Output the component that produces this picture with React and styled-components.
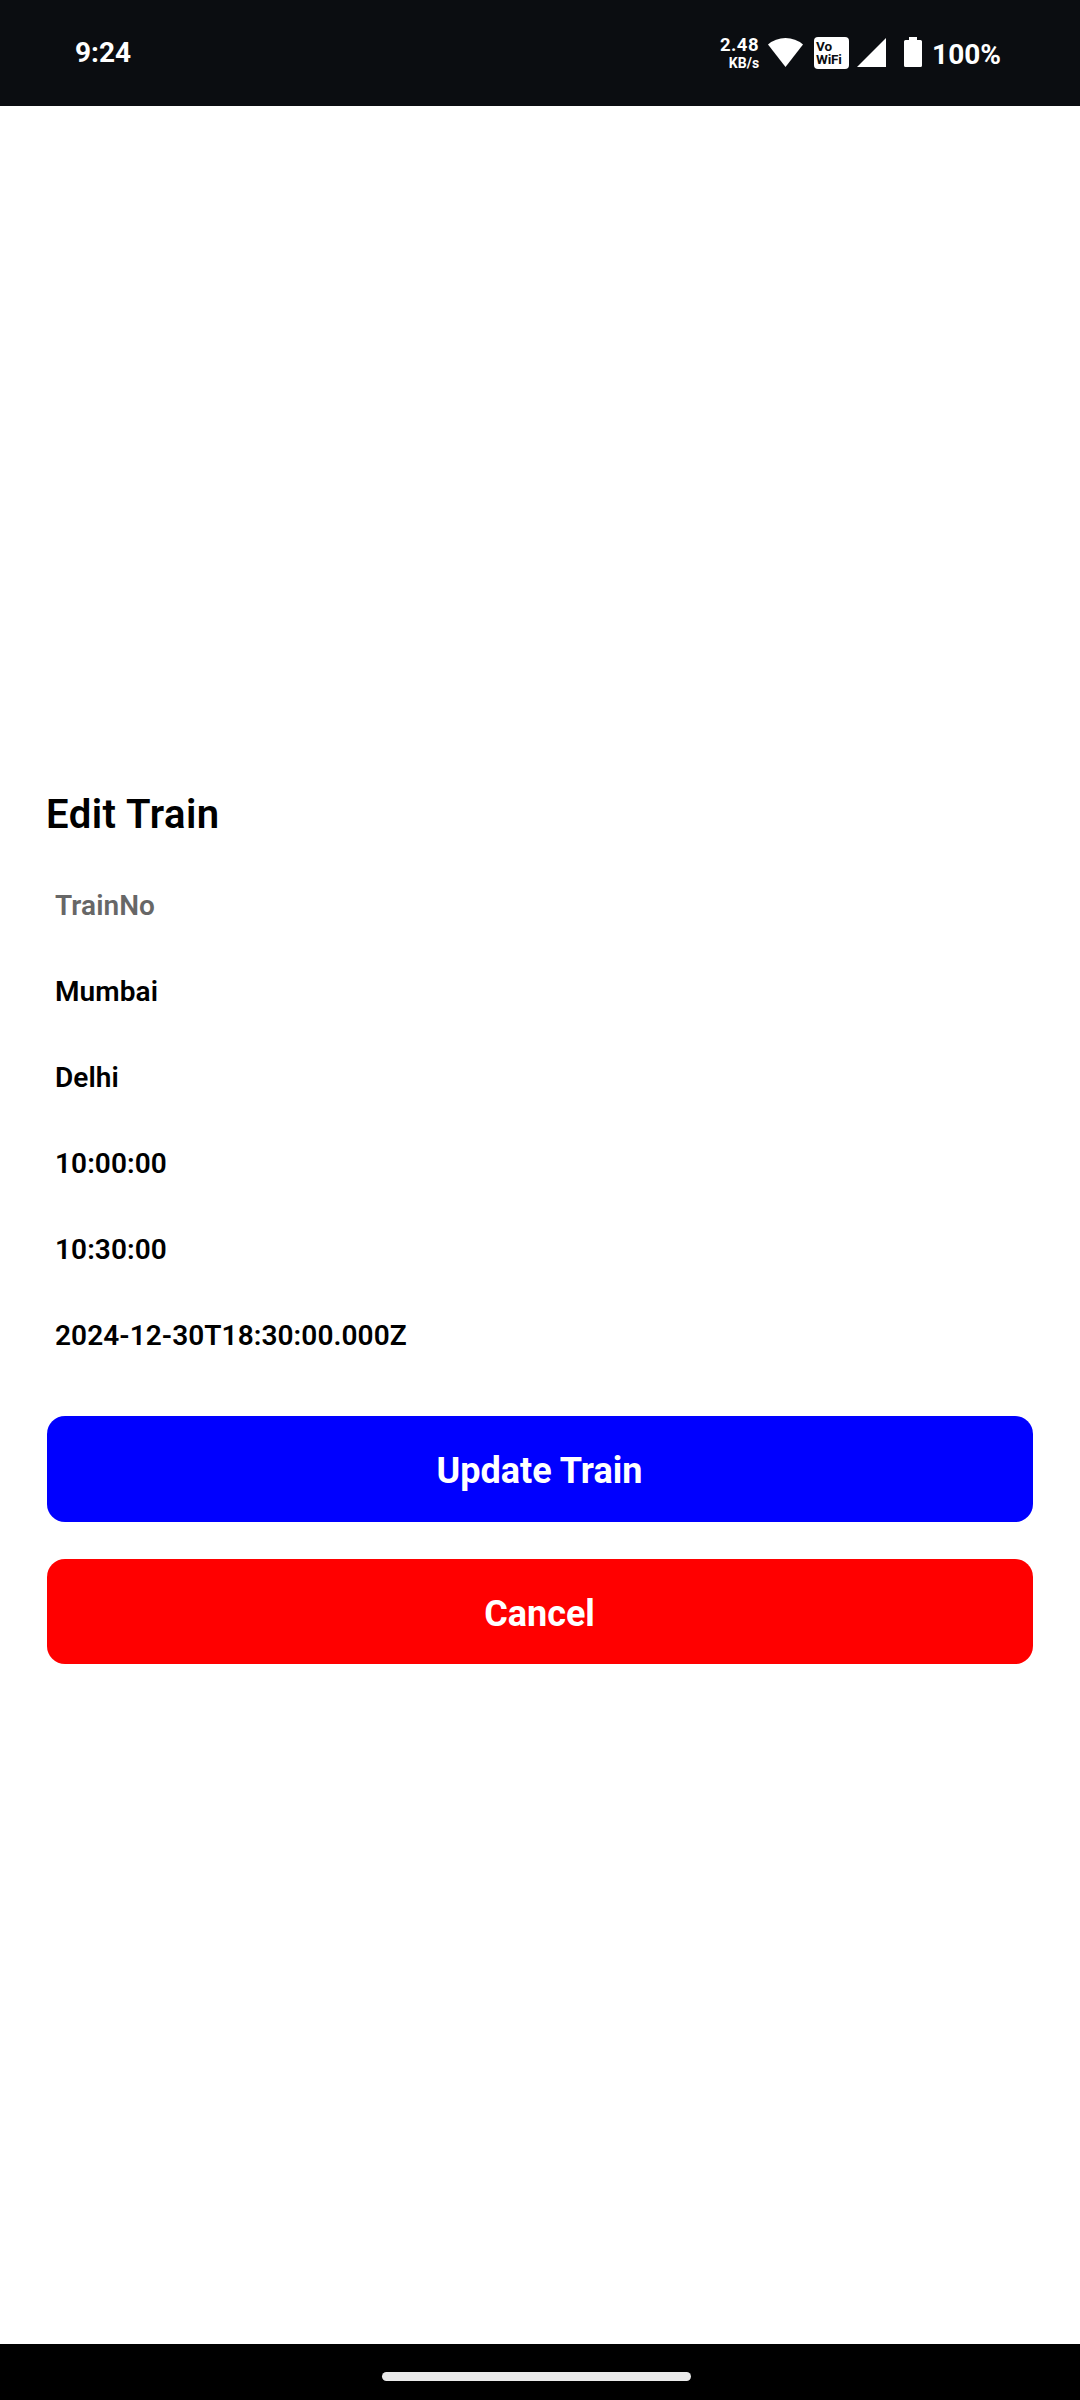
import React from "react";
import styled, { createGlobalStyle } from "styled-components";

const GlobalStyle = createGlobalStyle`
  * { box-sizing: border-box; }
  body { margin: 0; background: #fff; font-family: Roboto, "Liberation Sans", sans-serif; }
`;

const Screen = styled.div`
  width: 1080px;
  height: 2400px;
  display: flex;
  flex-direction: column;
  background: #fff;
`;

const StatusBar = styled.header`
  height: 106px;
  flex: none;
  display: flex;
  align-items: flex-start;
  justify-content: space-between;
  padding: 0 79px 0 75px;
  background: #0b0d11;
  color: #fff;
`;

const Clock = styled.time`
  margin-top: 37px;
  font-size: 28px;
  line-height: 32px;
  font-weight: 700;
`;

const StatusIcons = styled.div`
  display: flex;
  align-items: flex-start;
  padding-top: 36px;
`;

const NetSpeed = styled.div`
  display: flex;
  flex-direction: column;
  align-items: flex-end;
  margin-right: 9px;
  font-weight: 700;
`;

const SpeedValue = styled.span`
  font-size: 18.5px;
  line-height: 18px;
  letter-spacing: 0.5px;
`;

const SpeedUnit = styled.span`
  font-size: 14px;
  line-height: 18px;
`;

const Glyph = styled.svg`
  display: block;
  flex: none;
  fill: #fff;
  margin-right: ${(p) => p.$gap}px;
`;

const VoWifi = styled.div`
  width: 35px;
  height: 32px;
  margin: 1px 8px 0 0;
  padding: 3px 0 0 2px;
  border-radius: 4px;
  background: #fff;
  color: #0b0d11;
  font-size: 13.5px;
  line-height: 13px;
  letter-spacing: -0.2px;
  font-weight: 700;
`;

const Line = styled.div`
  white-space: nowrap;
`;

const BatteryLevel = styled.span`
  margin-top: 3px;
  font-size: 28px;
  line-height: 32px;
  font-weight: 700;
`;

const Form = styled.form`
  flex: 1;
  padding: 685px 47px 0;
`;

const Title = styled.h1`
  margin: 0 0 23px -1px;
  font-size: 40px;
  line-height: 48px;
  letter-spacing: 0.5px;
  font-weight: 600;
  color: #000;
`;

const Field = styled.input`
  display: block;
  width: 100%;
  height: 86px;
  padding: 0 8px;
  border: 0;
  outline: 0;
  background: transparent;
  font-family: inherit;
  font-size: 28px;
  font-weight: 600;
  letter-spacing: 0.08px;
  color: #000;
  &::placeholder { color: #676767; opacity: 1; }
`;

const Actions = styled.div`
  display: flex;
  flex-direction: column;
  gap: 37px;
  margin-top: 38px;
`;

const Button = styled.button`
  height: ${(p) => p.$height}px;
  padding: 4px 1px 0 0;
  border: 0;
  border-radius: 18px;
  background: ${(p) => p.$color};
  color: #fff;
  font-family: inherit;
  font-size: 36px;
  line-height: 42px;
  font-weight: 700;
`;

const NavBar = styled.footer`
  height: 56px;
  flex: none;
  display: flex;
  justify-content: center;
  padding: 28px 7px 0 0;
  background: #000;
`;

const Handle = styled.div`
  width: 309px;
  height: 9px;
  border-radius: 5px;
  background: #eaeaea;
`;

const values = ["Mumbai", "Delhi", "10:00:00", "10:30:00", "2024-12-30T18:30:00.000Z"];

export default function App() {
  return (
    <Screen>
      <GlobalStyle />
      <StatusBar>
        <Clock>9:24</Clock>
        <StatusIcons>
          <NetSpeed>
            <SpeedValue>2.48</SpeedValue>
            <SpeedUnit>KB/s</SpeedUnit>
          </NetSpeed>
          <Glyph width="35" height="31" viewBox="0 0 35 31" $gap={11}>
            <path d="M17.5 31 L0 8.5 Q7.500 2 17.500 2 Q27.500 2 35 8.500 Z" />
          </Glyph>
          <VoWifi>
            <Line>Vo</Line>
            <Line>WiFi</Line>
          </VoWifi>
          <Glyph width="29" height="31" viewBox="0 0 29 31" $gap={18}>
            <path d="M29 2V31H0Z" />
          </Glyph>
          <Glyph width="18" height="31" viewBox="0 0 18 31" $gap={10}>
            <path d="M5 1H13V4H16.500Q18 4 18 5.500V29.500Q18 31 16.500 31H1.500Q0 31 0 29.500V5.500Q0 4 1.500 4H5Z" />
          </Glyph>
          <BatteryLevel>100%</BatteryLevel>
        </StatusIcons>
      </StatusBar>
      <Form>
        <Title>Edit Train</Title>
        <Field placeholder="TrainNo" />
        {values.map((value) => (
          <Field key={value} defaultValue={value} />
        ))}
        <Actions>
          <Button type="button" $color="#00f" $height={106}>Update Train</Button>
          <Button type="button" $color="#f00" $height={105}>Cancel</Button>
        </Actions>
      </Form>
      <NavBar>
        <Handle />
      </NavBar>
    </Screen>
  );
}
